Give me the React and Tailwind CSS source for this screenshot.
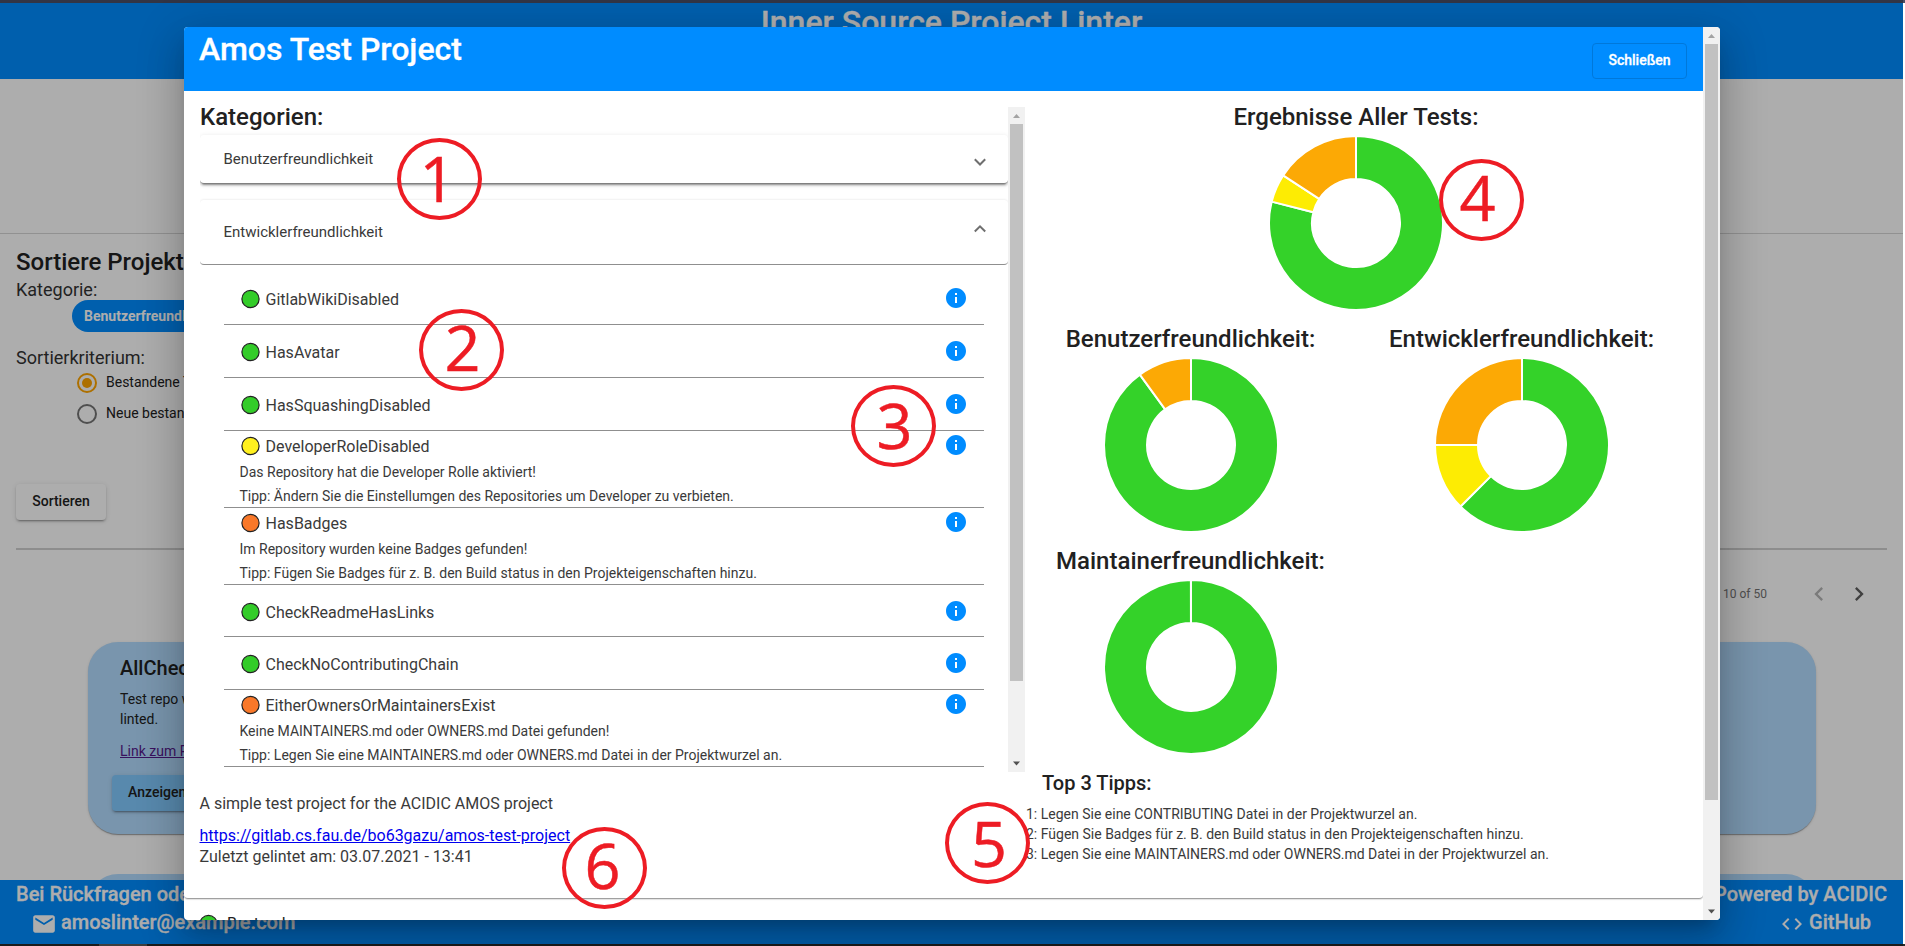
import React from "react";

const toneFill = { green: "#33cc29", yellow: "#fff01f", orange: "#f97829" };

function Dot({ tone }) {
  return (
    <svg width="20" height="20" viewBox="0 0 20 20" className="shrink-0">
      <circle cx="10.5" cy="10" r="8.6" fill={toneFill[tone]} stroke="#222" strokeWidth="1.2" />
    </svg>
  );
}

function InfoIcon() {
  return (
    <svg width="24" height="24" viewBox="0 0 24 24" className="shrink-0" fill="#008cff">
      <path d="M12 2C6.48 2 2 6.48 2 12s4.48 10 10 10 10-4.48 10-10S17.52 2 12 2zm1 15h-2v-6h2v6zm0-8h-2V7h2v2z" />
    </svg>
  );
}

const rules = [
  { name: "GitlabWikiDisabled", tone: "green", height: "h-[53px]" },
  { name: "HasAvatar", tone: "green", height: "h-[53px]" },
  { name: "HasSquashingDisabled", tone: "green", height: "h-[53px]" },
  {
    name: "DeveloperRoleDisabled",
    tone: "yellow",
    message: "Das Repository hat die Developer Rolle aktiviert!",
    tip: "Tipp: Ändern Sie die Einstellumgen des Repositories um Developer zu verbieten.",
  },
  {
    name: "HasBadges",
    tone: "orange",
    message: "Im Repository wurden keine Badges gefunden!",
    tip: "Tipp: Fügen Sie Badges für z. B. den Build status in den Projekteigenschaften hinzu.",
  },
  { name: "CheckReadmeHasLinks", tone: "green", height: "h-[52px]" },
  { name: "CheckNoContributingChain", tone: "green", height: "h-[53px]" },
  {
    name: "EitherOwnersOrMaintainersExist",
    tone: "orange",
    message: "Keine MAINTAINERS.md oder OWNERS.md Datei gefunden!",
    tip: "Tipp: Legen Sie eine MAINTAINERS.md oder OWNERS.md Datei in der Projektwurzel an.",
  },
];

function RuleRow({ rule }) {
  const head = (
    <div className="flex h-6 items-center pl-4 pr-4">
      <Dot tone={rule.tone} />
      <span className="ml-[5.5px] flex-1 pt-px text-base leading-6">{rule.name}</span>
      <span className="-mt-[3px] flex">
        <InfoIcon />
      </span>
    </div>
  );
  if (!rule.message) {
    return <li className={`border-b border-[#8f8f8f] pt-[15px] ${rule.height}`}>{head}</li>;
  }
  return (
    <li className="h-[77px] border-b border-[#8f8f8f] pt-[3px] text-sm">
      {head}
      <p className="pl-[15.5px] pt-[2px] leading-6">{rule.message}</p>
      <p className="pl-[15.5px] leading-6">{rule.tip}</p>
    </li>
  );
}

const segColor = { g: "#34d229", y: "#fdec03", o: "#fca905" };

function Donut({ parts }) {
  const total = parts.reduce((s, p) => s + p.n, 0);
  const R = 87;
  const r = 44;
  let acc = 0;
  const at = (f, rad) => {
    const a = f * 2 * Math.PI - Math.PI / 2;
    return `${(88 + rad * Math.cos(a)).toFixed(4)} ${(88 + rad * Math.sin(a)).toFixed(4)}`;
  };
  return (
    <svg width="176" height="176" viewBox="0 0 176 176">
      {parts.map((p) => {
        const f0 = acc / total;
        acc += p.n;
        const f1 = Math.min(acc / total, f0 + 0.9998);
        const big = f1 - f0 > 0.5 ? 1 : 0;
        return (
          <path
            key={p.c}
            d={`M${at(f0, R)} A${R} ${R} 0 ${big} 1 ${at(f1, R)} L${at(f1, r)} A${r} ${r} 0 ${big} 0 ${at(f0, r)} Z`}
            fill={segColor[p.c]}
            stroke="#fff"
            strokeWidth="2"
          />
        );
      })}
    </svg>
  );
}

function ChartBlock({ title, parts }) {
  return (
    <div className="flex h-[222px] flex-col items-center">
      <h2 className="-mt-[6px] mb-[6px] h-7 text-2xl font-medium leading-8">{title}</h2>
      <Donut parts={parts} />
    </div>
  );
}

function ScrollBar({ thumb }) {
  return (
    <div className="flex w-[17px] shrink-0 flex-col items-center bg-[#f1f1f1]">
      <svg width="17" height="17" viewBox="0 0 17 17">
        <path d="M8.5 7 L12 11 H5 Z" fill="#a3a3a3" />
      </svg>
      <div className={`w-[13px] bg-[#c1c1c1] ${thumb}`} />
      <svg width="17" height="17" viewBox="0 0 17 17" className="mt-auto">
        <path d="M8.5 10.5 L12 6.5 H5 Z" fill="#505050" />
      </svg>
    </div>
  );
}

function Chevron({ d, color, className = "" }) {
  return (
    <svg width="28" height="28" viewBox="0 0 24 24" fill={color} className={className}>
      <path d={d} />
    </svg>
  );
}

function PanelArrow({ up }) {
  return (
    <svg width="14" height="10" viewBox="0 0 14 10" fill="none" stroke="#6f6f6f" strokeWidth="2">
      <path d={up ? "M1.8 7.5 L7 2.3 L12.2 7.5" : "M1.8 2.3 L7 7.5 L12.2 2.3"} />
    </svg>
  );
}

function Radio({ on, label }) {
  return (
    <div className="flex h-[31px] items-center gap-[9px] pl-[61px] text-sm">
      <svg width="20" height="20" viewBox="0 0 20 20" fill="none">
        <circle cx="10" cy="10" r="9" stroke={on ? "#ffa500" : "#757575"} strokeWidth="2" />
        {on && <circle cx="10" cy="10" r="5" fill="#ffa500" />}
      </svg>
      <span className="-mt-0.5">{label}</span>
    </div>
  );
}

function Background() {
  return (
    <div className="flex h-[946px] flex-col overflow-hidden">
      <div className="h-[3px] shrink-0 bg-[#4b4e66]" />
      <div className="mr-[2px] flex h-[941px] flex-col overflow-hidden bg-white text-[#212121]">
        <header className="h-[76px] shrink-0 bg-[#008cff] text-center text-[32px] font-medium leading-[38px] text-white [-webkit-text-stroke:0.3px]">
          Inner Source Project Linter
        </header>
        <div className="h-[155px] shrink-0 border-b border-[#d6d6d6]" />
        <section className="flex h-[316px] shrink-0 flex-col px-4">
          <h2 className="mt-[12px] text-2xl font-medium leading-8">Sortiere Projekte</h2>
          <div className="h-[22px] text-lg leading-6 text-[#333]">Kategorie:</div>
          <div className="ml-14 flex h-8 w-[190px] shrink-0 items-center rounded-full bg-[#008cff] pl-3 text-sm font-bold text-white">
            Benutzerfreundlichkeit
          </div>
          <div className="mt-[14px] h-[21px] text-lg leading-6 text-[#333]">Sortierkriterium:</div>
          <Radio on label="Bestandene Tests" />
          <Radio label="Neue bestandene Tests" />
          <button className="mt-[55px] h-9 w-[90px] shrink-0 rounded bg-white pb-[2px] text-sm font-medium shadow-[0_3px_1px_-2px_rgba(0,0,0,.2),0_2px_2px_rgba(0,0,0,.14),0_1px_5px_rgba(0,0,0,.12)]">
            Sortieren
          </button>
          <div className="mt-auto h-[2px] shrink-0 bg-[#d0d0d0]" />
        </section>
        <div className="flex h-[92px] shrink-0 items-center justify-end pb-[5px] pr-[30px] text-xs text-[#757575]">
          <span className="mr-[38px]">1 –&nbsp; 10 of 50</span>
          <Chevron className="mr-[12px]" color="#b5b5b5" d="M15.41 7.41L14 6l-6 6 6 6 1.41-1.41L10.83 12z" />
          <Chevron color="#5f5f5f" d="M10 6L8.59 7.41 13.17 12l-4.58 4.59L10 18l6-6z" />
        </div>
        <div className="ml-[88px] mr-[87px] flex h-[192px] shrink-0 flex-col items-start rounded-[30px] bg-[#b3dcff] pl-8 pt-[14px] shadow-[0_2px_1px_-1px_rgba(0,0,0,.2),0_1px_1px_rgba(0,0,0,.14),0_1px_3px_rgba(0,0,0,.12)]">
          <h3 className="text-xl font-medium leading-6">AllChecksPassed</h3>
          <p className="mt-[9px] text-sm leading-5">
            Test repo where all checks are
            <br />
            linted.
          </p>
          <a className="mt-[12px] text-sm leading-5 text-[#551a8b] underline">Link zum Projekt</a>
          <button className="-ml-2 mt-[14px] h-9 rounded bg-[#82caff] px-4 pb-[2px] text-sm font-medium shadow-[0_3px_1px_-2px_rgba(0,0,0,.2),0_2px_2px_rgba(0,0,0,.14),0_1px_5px_rgba(0,0,0,.12)]">
            Anzeigen
          </button>
        </div>
        <div className="ml-[88px] mr-[87px] mt-10 h-[6px] shrink-0 overflow-hidden">
          <div className="h-[192px] rounded-[30px] bg-[#b3dcff]" />
        </div>
        <footer className="flex h-[64px] shrink-0 justify-between bg-[#008cff] px-4 text-xl font-medium leading-7 text-white [-webkit-text-stroke:0.3px]">
          <div>
            <div>Bei Rückfragen oder Anregungen</div>
            <div className="flex items-center gap-[4px] pl-[15px] leading-[27px]">
              <svg width="26" height="26" viewBox="0 0 24 24" fill="currentColor" stroke="none" className="mt-[3px]">
                <path d="M20 4H4c-1.1 0-1.99.9-1.99 2L2 18c0 1.1.9 2 2 2h16c1.1 0 2-.9 2-2V6c0-1.1-.9-2-2-2zm0 4l-8 5-8-5V6l8 5 8-5v2z" />
              </svg>
              amoslinter@example.com
            </div>
          </div>
          <div className="flex flex-col items-end">
            <div>Powered by ACIDIC</div>
            <div className="flex items-center gap-[5px] pr-4 leading-[29px]">
              <svg width="24" height="24" viewBox="0 0 24 24" fill="currentColor" className="mt-[3px]">
                <path d="M9.4 16.6L4.8 12l4.6-4.6L8 6l-6 6 6 6 1.4-1.4zm5.2 0l4.6-4.6-4.6-4.6L16 6l6 6-6 6-1.4-1.4z" />
              </svg>
              GitHub
            </div>
          </div>
        </footer>
      </div>
      <div className="flex h-[2px] bg-[#2a2a2a]">
        <div className="ml-[99px] w-12 bg-[#5c5c5c]" />
      </div>
    </div>
  );
}

function Dialog() {
  return (
    <div
      role="dialog"
      className="absolute left-[184px] top-[27px] flex h-[893px] w-[1536px] overflow-hidden rounded-[4px] bg-white text-[#212121] shadow-[0_11px_15px_-7px_rgba(0,0,0,.2),0_24px_38px_3px_rgba(0,0,0,.14),0_9px_46px_8px_rgba(0,0,0,.12)]"
    >
      <div className="flex w-[1519px] flex-col">
        <div className="flex h-16 shrink-0 justify-between bg-[#008cff] pl-[15px] pr-4 text-white [-webkit-text-stroke:0.3px]">
          <h1 className="text-[32px] font-medium leading-[44px]">Amos Test Project</h1>
          <button className="mt-4 h-9 w-[95px] rounded border border-[#0078da] pb-[2px] text-sm font-medium">
            Schließen
          </button>
        </div>
        <div className="flex h-[808px] shrink-0 rounded-b border-b border-[#a0a0a0] pl-4 shadow-[0_1px_1px_rgba(0,0,0,.12)]">
          <div className="w-[825px] pt-4 text-[#3a3a3a]">
            <div className="flex h-[665px]">
              <div className="w-[808px] overflow-hidden">
                <h2 className="h-7 text-2xl font-medium leading-[21px] text-[#212121]">Kategorien:</h2>
                <div className="flex h-[49px] items-center justify-between rounded border-b border-[#808080] pl-[23.5px] pr-[21px] text-[15px] shadow-[0_3px_1px_-2px_rgba(0,0,0,.2),0_2px_2px_rgba(0,0,0,.14),0_1px_5px_rgba(0,0,0,.12)]">
                  <span>Benutzerfreundlichkeit</span>
                  <span className="mt-[6px] flex">
                    <PanelArrow />
                  </span>
                </div>
                <div className="mt-4 flex h-[65px] items-center justify-between rounded border-b border-[#8f8f8f] pl-[23.5px] pr-[21px] text-[15px] shadow-[0_-1px_2px_rgba(0,0,0,.06)]">
                  <span>Entwicklerfreundlichkeit</span>
                  <span className="-mt-[6px] flex">
                    <PanelArrow up />
                  </span>
                </div>
                <ul className="mx-6 mt-[7px]">
                  {rules.map((r) => (
                    <RuleRow key={r.name} rule={r} />
                  ))}
                </ul>
              </div>
              <ScrollBar thumb="h-[557px]" />
            </div>
            <div className="-ml-[0.5px] pt-5 text-base leading-6">
              <p>A simple test project for the ACIDIC AMOS project</p>
              <a className="mt-2 block text-[#0000ee] underline">https://gitlab.cs.fau.de/bo63gazu/amos-test-project</a>
              <p className="-mt-[3px]">Zuletzt gelintet am: 03.07.2021 - 13:41</p>
            </div>
          </div>
          <div className="flex flex-1 flex-col pt-4">
            <div className="pr-4">
              <ChartBlock title="Ergebnisse Aller Tests:" parts={[{ c: "g", n: 15 }, { c: "y", n: 1 }, { c: "o", n: 3 }]} />
            </div>
            <div className="grid grid-cols-[331px_331px]">
              <ChartBlock title="Benutzerfreundlichkeit:" parts={[{ c: "g", n: 9 }, { c: "o", n: 1 }]} />
              <ChartBlock title="Entwicklerfreundlichkeit:" parts={[{ c: "g", n: 5 }, { c: "y", n: 1 }, { c: "o", n: 2 }]} />
              <ChartBlock title="Maintainerfreundlichkeit:" parts={[{ c: "g", n: 1 }]} />
            </div>
            <h3 className="-mt-[4px] pl-[17px] text-xl font-medium leading-7">Top 3 Tipps:</h3>
            <div className="mt-[7px] pl-[1px] text-sm leading-5 text-[#3a3a3a]">
              <p>1: Legen Sie eine CONTRIBUTING Datei in der Projektwurzel an.</p>
              <p>2: Fügen Sie Badges für z. B. den Build status in den Projekteigenschaften hinzu.</p>
              <p>3: Legen Sie eine MAINTAINERS.md oder OWNERS.md Datei in der Projektwurzel an.</p>
            </div>
          </div>
        </div>
        <div className="flex items-start pl-[14px] pt-[15px]">
          <Dot tone="green" />
          <span className="ml-[9px] text-base leading-5">Bestanden</span>
        </div>
      </div>
      <ScrollBar thumb="h-[756px]" />
    </div>
  );
}

const marks = [
  { n: 1, pos: "left-[397px] top-[138px]", pad: "pr-[4px] pb-[3px]" },
  { n: 2, pos: "left-[419px] top-[309px]", pad: "pl-[2px] pb-[8px]" },
  { n: 3, pos: "left-[851px] top-[385px]", pad: "pl-[2px] pb-[3px]" },
  { n: 4, pos: "left-[1439px] top-[159px]", pad: "pr-[8px] pb-[8px]" },
  { n: 5, pos: "left-[945px] top-[802px]", pad: "pl-[3px] pb-[1px]" },
  { n: 6, pos: "left-[562px] top-[827px]", pad: "pr-[4px] pb-[8px]" },
];

export default function App() {
  return (
    <div className="relative h-[946px] w-[1905px] overflow-hidden bg-white font-['Roboto',sans-serif]">
      <Background />
      <div className="absolute inset-y-0 left-0 w-[1903px] bg-black/[.32]" />
      <Dialog />
      {marks.map((m) => (
        <div
          key={m.n}
          className={`absolute flex h-[82px] w-[85px] items-center justify-center rounded-[50%] border-4 border-[#ed1c24] font-['Open_Sans',sans-serif] text-[63px] leading-none text-[#ed1c24] [-webkit-text-stroke:0.5px] ${m.pos} ${m.pad}`}
        >
          {m.n}
        </div>
      ))}
    </div>
  );
}
